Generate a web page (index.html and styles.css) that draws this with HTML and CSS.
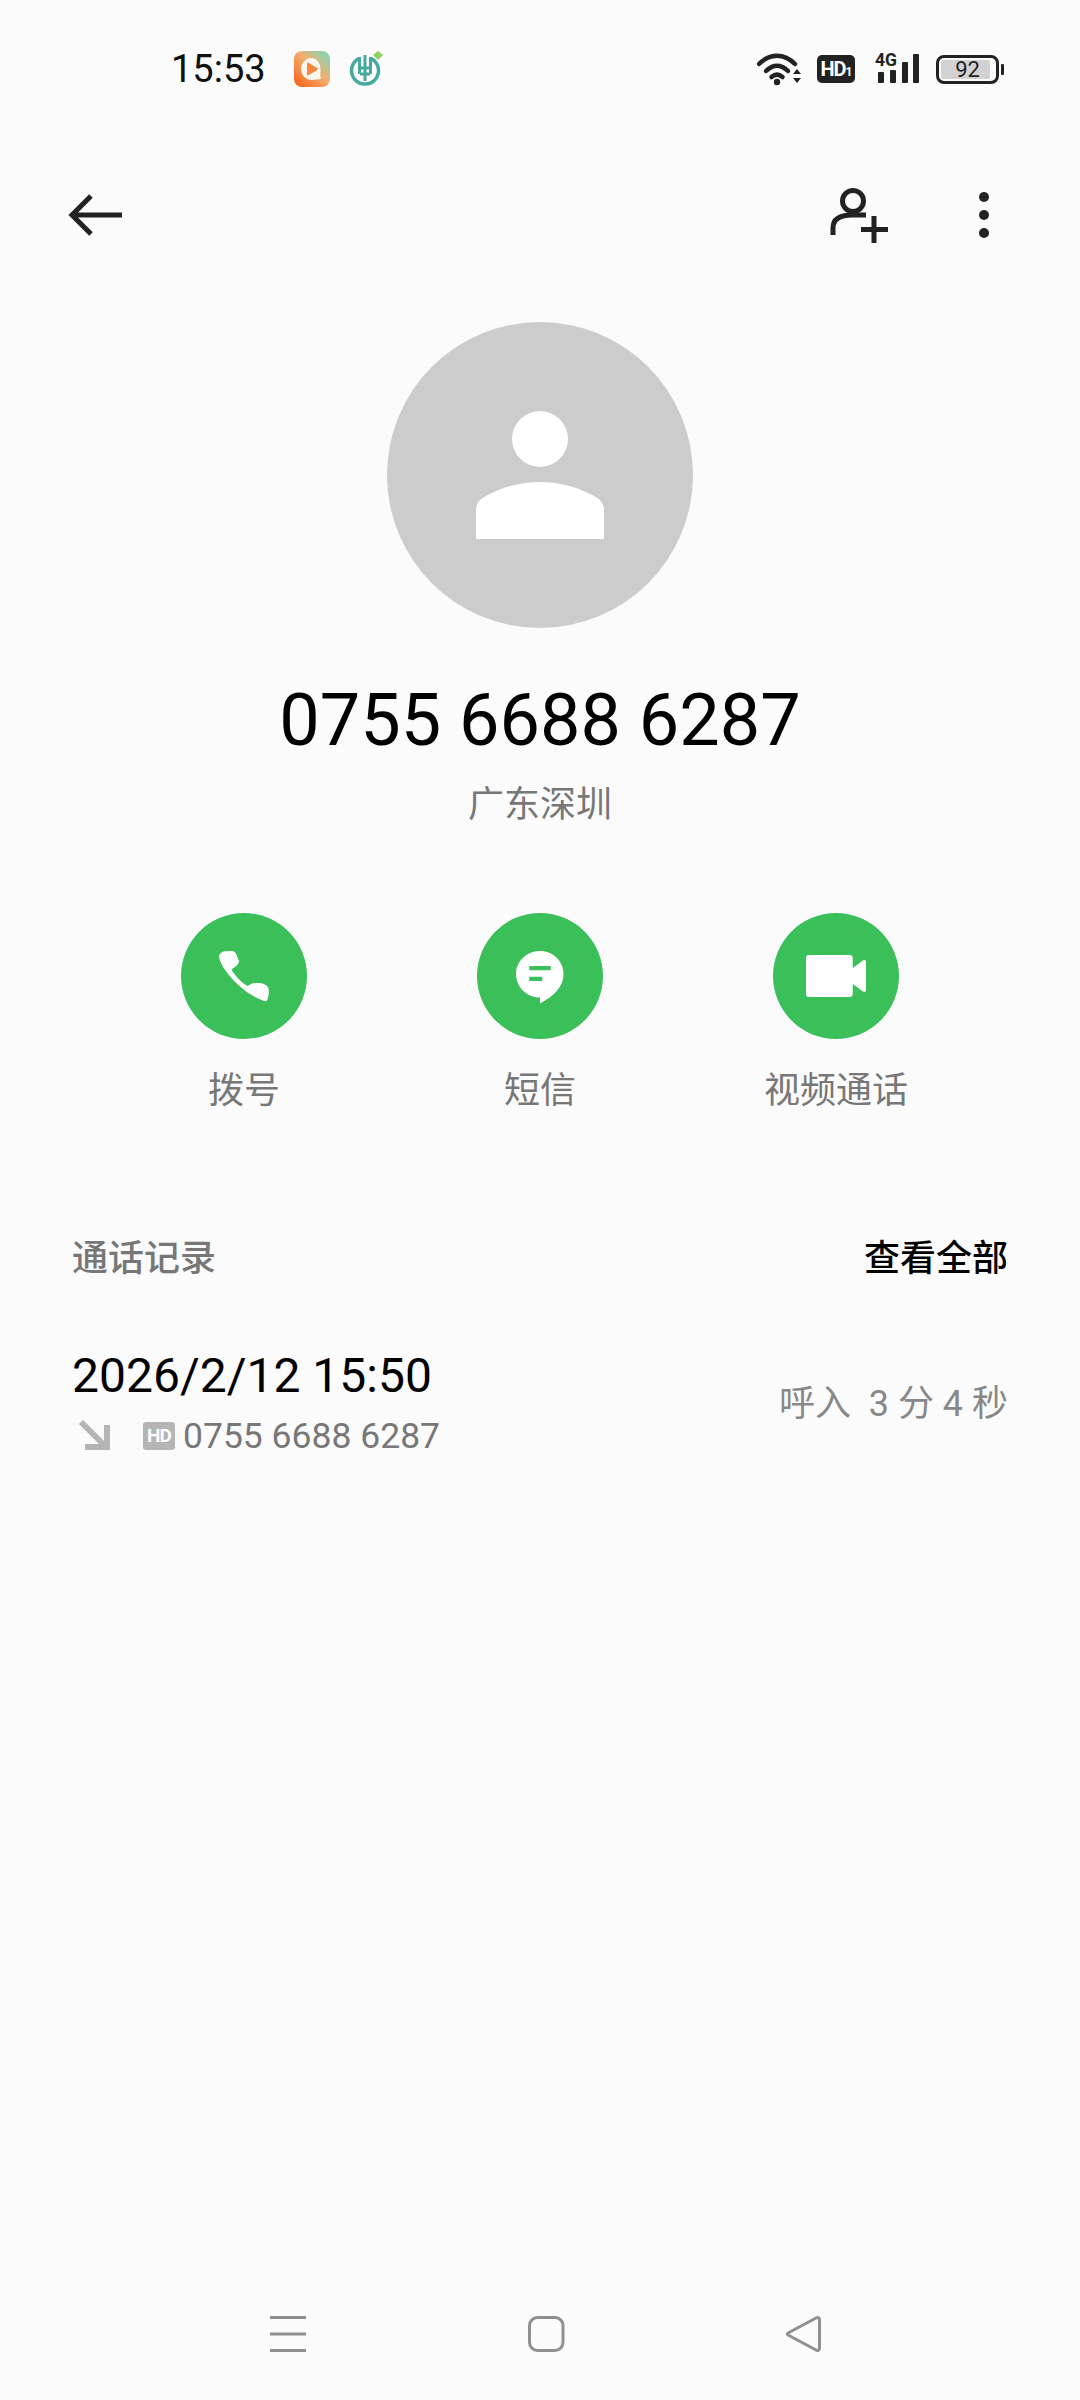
FILE: index.html
```html
<!DOCTYPE html>
<html lang="zh-CN">
<head>
    <meta charset="UTF-8">
    <meta name="viewport" content="width=device-width, initial-scale=1.0">
    <title>通话详情</title>
    <link rel="stylesheet" href="styles.css">
</head>
<body>
    <div class="screen">
        <div class="status-bar">
            <span class="clock">15:53</span>
            <svg class="app-video" width="36" height="36" viewBox="0 0 36 36">
                <defs>
                    <linearGradient id="videoGrad" x1="0" y1="1" x2="1" y2="0">
                        <stop offset="0" stop-color="#fb5a12"/>
                        <stop offset="0.55" stop-color="#f0b070"/>
                        <stop offset="1" stop-color="#6fdcc0"/>
                    </linearGradient>
                </defs>
                <rect width="36" height="36" rx="8" fill="url(#videoGrad)"/>
                <path d="M18 7a11 11 0 1 0 0 22c3 0 6-1 9-1-1-3-.5-6-.5-10A10.500 10.500 0 0 0 18 7z" fill="#fdf6ee"/>
                <path d="M14 12.500l9 5.500-9 5.500z" fill="#f58a3c" stroke="#f58a3c" stroke-width="2" stroke-linejoin="round"/>
            </svg>
            <svg class="app-bank" width="38" height="38" viewBox="0 0 38 38">
                <circle cx="18" cy="21" r="16" fill="#fff"/>
                <path d="M12 9.500A13.500 13.500 0 1 0 24 9.500" fill="none" stroke="#45a9a0" stroke-width="3.500"/>
                <path d="M12.500 8v17M23.500 8v17M18 6v26M13 25h10M13 19h10" fill="none" stroke="#45a9a0" stroke-width="3"/>
                <path d="M26 6l5-4 5 4-5 5z" fill="#8ed05a"/>
            </svg>
            <div class="status-icons">
                <svg width="46" height="36" viewBox="0 0 46 36">
                    <path d="M2 13C13 2 27 2 38 13" fill="none" stroke="#222" stroke-width="4.500" stroke-linecap="round"/>
                    <path d="M9 20C16 13 24 13 31 20" fill="none" stroke="#222" stroke-width="4.500" stroke-linecap="round"/>
                    <path d="M14.500 26C18 23 22 23 25.500 26" fill="none" stroke="#222" stroke-width="4.500" stroke-linecap="round"/>
                    <circle cx="20" cy="31" r="3.200" fill="#222"/>
                    <path d="M36 23l4-5 4 5zM36 27l4 5 4-5z" fill="#222"/>
                </svg>
                <div class="hd-badge">HD<small>1</small></div>
                <svg class="signal" width="44" height="44" viewBox="0 -5 44 44">
                    <text x="0" y="14" class="net-type" textLength="22" lengthAdjust="spacingAndGlyphs">4G</text>
                    <rect x="3" y="20" width="6" height="11" rx="1" fill="#222"/>
                    <rect x="15" y="18" width="6" height="13" rx="1" fill="#222"/>
                    <rect x="27" y="10" width="6" height="21" rx="1" fill="#222"/>
                    <rect x="38" y="2" width="6" height="29" rx="1" fill="#222"/>
                </svg>
                <div class="battery">
                    <div class="battery-body">
                        <div class="battery-fill"></div>
                        <span class="battery-num">92</span>
                    </div>
                    <div class="battery-nub"></div>
                </div>
            </div>
        </div>

        <div class="toolbar">
            <svg width="60" height="60" viewBox="0 0 60 60">
                <path d="M56 30H6M25 11L6 30l19 19" fill="none" stroke="#222" stroke-width="5"/>
            </svg>
            <div class="toolbar-right">
                <svg width="60" height="60" viewBox="0 0 60 60">
                    <circle cx="23" cy="16" r="10.500" fill="none" stroke="#222" stroke-width="5"/>
                    <path d="M3 50V43C3 33 12 30 22 30H36" fill="none" stroke="#222" stroke-width="5"/>
                    <path d="M44 31V58M31 44.500H58" fill="none" stroke="#222" stroke-width="5"/>
                </svg>
                <svg width="40" height="60" viewBox="0 0 40 60">
                    <circle cx="20" cy="12" r="5" fill="#222"/>
                    <circle cx="20" cy="30" r="5" fill="#222"/>
                    <circle cx="20" cy="48" r="5" fill="#222"/>
                </svg>
            </div>
        </div>

        <div class="contact">
            <div class="avatar">
                <svg width="128" height="128" viewBox="0 0 128 128">
                    <circle cx="64" cy="28" r="28" fill="#fff"/>
                    <path d="M0 128V100C0 91 5 87 14 83C30 75 46 71 64 71C82 71 98 75 114 83C123 87 128 91 128 100V128Z" fill="#fff"/>
                </svg>
            </div>
            <h1 class="number">0755 6688 6287</h1>
            <div class="region">广东深圳</div>
        </div>

        <div class="actions">
            <div class="action">
                <div class="action-circle">
                    <svg width="60" height="60" viewBox="0 0 60 60">
                        <path d="M5 10C5.500 7.500 8 5.500 11 5.200L18 5C20.500 5 22 7 23 10L25 15C25 17 23.500 19 21.500 20.500L17.500 23.500C21 30 27 36 33.500 40L38 37.500C40 37 42.500 37 45 37C48 37 52 38.500 54 41C55 43 55 46 54.500 49L53.500 53.500C53 55.500 51.500 55.500 49 54.500C36 50 20 38 9 21C7 17 5 13 5 10Z" fill="#fff"/>
                    </svg>
                </div>
                <div class="action-label">拨号</div>
            </div>
            <div class="action">
                <div class="action-circle">
                    <svg width="60" height="60" viewBox="0 0 60 60">
                        <path d="M30 5C43 5 53.500 15 53.500 28C53.500 41 44 50 30 57.500V51.500C17 51.500 6 41 6 28C6 15 17 5 30 5Z" fill="#fff"/>
                        <path d="M19.300 20H40.700V24.300H19.300ZM19.300 30.700H32.300V35H19.300Z" fill="#3bbf58"/>
                    </svg>
                </div>
                <div class="action-label">短信</div>
            </div>
            <div class="action">
                <div class="action-circle">
                    <svg width="60" height="60" viewBox="0 0 60 60">
                        <path d="M3 9H43.700C45.500 9 46.700 10 46.700 12V22L57 14.500C59 13.500 60 14.500 60 16V44C60 45.500 59 46.500 57 45.500L46.700 38V48C46.700 50 45.500 51 43.700 51H3C1 51 0 50 0 48V12C0 10 1 9 3 9Z" fill="#fff"/>
                    </svg>
                </div>
                <div class="action-label">视频通话</div>
            </div>
        </div>

        <div class="section-head">
            <span class="section-title">通话记录</span>
            <span class="section-link">查看全部</span>
        </div>

        <div class="call-row">
            <div class="call-main">
                <div class="call-date">2026/2/12 15:50</div>
                <div class="call-sub">
                    <svg class="call-arrow" width="44" height="34" viewBox="0 0 44 34">
                        <path d="M9 3L33 27M13 28H35V6" fill="none" stroke="#b5b5b5" stroke-width="6"/>
                    </svg>
                    <span class="hd-tag">HD</span>
                    <span class="call-number">0755 6688 6287</span>
                </div>
            </div>
            <div class="call-info">呼入&nbsp; 3 分 4 秒</div>
        </div>

        <div class="nav-bar">
            <svg width="60" height="60" viewBox="0 0 60 60">
                <path d="M12 13.500H48M12 30H48M12 46.500H48" fill="none" stroke="#909090" stroke-width="3"/>
            </svg>
            <svg width="60" height="60" viewBox="0 0 60 60">
                <rect x="13.500" y="13.500" width="33.500" height="33" rx="8" fill="none" stroke="#909090" stroke-width="3"/>
            </svg>
            <svg width="60" height="60" viewBox="0 0 60 60">
                <path d="M14 29L42 14C44 13 45.500 14 45.500 16V44C45.500 46 44 47 42 46L14 31C13 30.500 13 29.500 14 29Z" fill="none" stroke="#909090" stroke-width="3" stroke-linejoin="round"/>
            </svg>
        </div>
    </div>
</body>
</html>
```

FILE: styles.css
```css
* {
    box-sizing: border-box;
}
body {
    margin: 0;
    background-color: #fbfbfb;
    font-family: Roboto, "Noto Sans CJK SC", sans-serif;
}
svg {
    display: block;
    flex-shrink: 0;
}
.screen {
    width: 1080px;
    height: 2400px;
    display: flex;
    flex-direction: column;
}

/* status bar */
.status-bar {
    height: 138px;
    display: flex;
    align-items: center;
    padding-left: 171px;
    padding-right: 76px;
}
.clock {
    font-size: 38px;
    color: #111;
    width: 123px;
}
.app-bank {
    margin-left: 17px;
    margin-top: -2px;
}
.status-icons {
    margin-left: auto;
    display: flex;
    align-items: center;
}
.hd-badge {
    width: 38px;
    height: 28px;
    margin-left: 14px;
    background-color: #222;
    border-radius: 5px;
    color: #fff;
    font-size: 20px;
    font-weight: 700;
    line-height: 28px;
    text-align: center;
    letter-spacing: -1px;
}
.hd-badge small {
    font-size: 12px;
}
.signal {
    margin-left: 20px;
}
.net-type {
    font-family: Roboto, sans-serif;
    font-size: 18px;
    font-weight: 700;
    fill: #222;
}
.battery {
    margin-left: 17px;
    display: flex;
    align-items: center;
    gap: 2px;
}
.battery-body {
    width: 63px;
    height: 29px;
    border: 3px solid #222;
    border-radius: 8px;
    padding: 2px;
    position: relative;
}
.battery-fill {
    width: 92%;
    height: 100%;
    background-color: #d2d2d2;
    border-radius: 2px;
}
.battery-num {
    position: absolute;
    inset: 0;
    text-align: center;
    font-size: 22px;
    line-height: 23px;
    color: #222;
}
.battery-nub {
    width: 3px;
    height: 11px;
    background-color: #222;
    border-radius: 1px;
}

/* toolbar */
.toolbar {
    height: 154px;
    display: flex;
    align-items: center;
    justify-content: space-between;
    padding-left: 66px;
    padding-right: 76px;
}
.toolbar-right {
    display: flex;
    align-items: center;
    gap: 74px;
}

/* contact */
.contact {
    margin-top: 30px;
    display: flex;
    flex-direction: column;
    align-items: center;
}
.avatar {
    width: 306px;
    height: 306px;
    border-radius: 50%;
    background-color: #ccc;
    display: flex;
    justify-content: center;
    padding-top: 89px;
}
.number {
    margin: 48px 0 0;
    font-size: 72px;
    line-height: 90px;
    font-weight: 400;
    color: #000;
}
.region {
    margin-top: 14px;
    font-size: 36px;
    line-height: 50px;
    color: #777;
}

/* actions */
.actions {
    margin-top: 83px;
    display: flex;
    justify-content: center;
}
.action {
    width: 296px;
    display: flex;
    flex-direction: column;
    align-items: center;
}
.action-circle {
    width: 126px;
    height: 126px;
    border-radius: 50%;
    background-color: #3bbf58;
    display: flex;
    align-items: center;
    justify-content: center;
}
.action-label {
    margin-top: 27px;
    font-size: 36px;
    line-height: 50px;
    color: #777;
}

/* call log */
.section-head {
    margin-top: 118px;
    padding: 0 72px;
    display: flex;
    justify-content: space-between;
    font-size: 36px;
    line-height: 50px;
}
.section-title {
    color: #777;
    font-weight: 500;
}
.section-link {
    color: #000;
    font-weight: 500;
}
.call-row {
    margin-top: 62px;
    padding: 0 72px;
    display: flex;
    justify-content: space-between;
    align-items: center;
}
.call-date {
    font-size: 48px;
    line-height: 60px;
    color: #000;
}
.call-sub {
    margin-top: 5px;
    display: flex;
    align-items: center;
    height: 50px;
}
.call-arrow {
    margin-right: 27px;
}
.hd-tag {
    width: 32px;
    height: 28px;
    background-color: #b5b5b5;
    border-radius: 3px;
    color: #fff;
    font-size: 19px;
    font-weight: 700;
    line-height: 28px;
    text-align: center;
    letter-spacing: -1px;
}
.call-number {
    margin-left: 8px;
    font-size: 35.5px;
    color: #777;
}
.call-info {
    margin-bottom: 8px;
    font-size: 36px;
    color: #888;
}

/* bottom nav */
.nav-bar {
    margin-top: auto;
    height: 132px;
    display: flex;
    align-items: center;
    justify-content: center;
    gap: 198px;
    padding-left: 12px;
}
```
